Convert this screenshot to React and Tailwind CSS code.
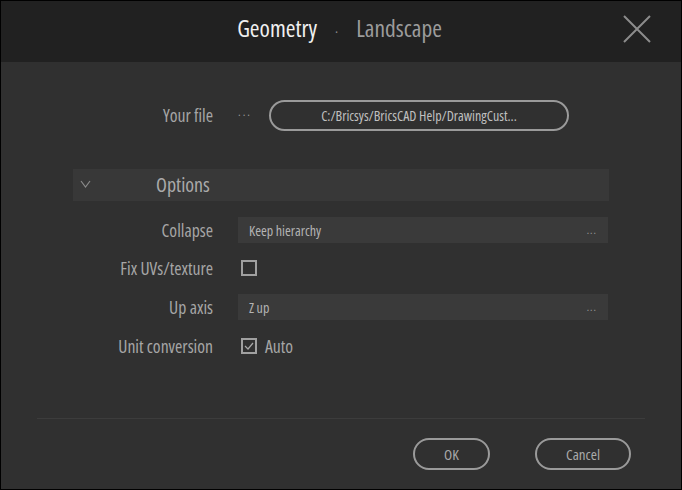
import React from "react";

const Field = ({ value }) => (
  <div className="flex h-[26px] w-[370px] items-center justify-between bg-[#3a3a3a] pl-[11px] pr-[11px] text-[14px] text-[#b4b4b4]">
    <span>{value}</span>
    <span className="text-[11px] tracking-[1px] text-[#9a9a9a]">...</span>
  </div>
);

const Row = ({ label, children, className = "" }) => (
  <div className={`flex items-center ${className}`}>
    <div className="w-[212px] shrink-0 text-right text-[17.7px] text-[#a6a6a6]">{label}</div>
    <div className="ml-[25px] flex items-center">{children}</div>
  </div>
);

const Checkbox = ({ checked }) => (
  <div className="flex h-[16px] w-[16px] items-center justify-center border-2 border-[#a0a0a0]">
    {checked && (
      <svg width="10" height="8" viewBox="0 0 10 8" fill="none">
        <path d="M1 4 L4 7 L9 1" stroke="#a8a8a8" strokeWidth="1.2" />
      </svg>
    )}
  </div>
);

export default function App() {
  return (
    <div className="h-[490px] w-[682px] border border-black bg-[#303030] font-['Open_Sans','DejaVu_Sans_Condensed',sans-serif] [font-stretch:75%]">
      {/* Header */}
      <div className="relative flex h-[61px] items-start justify-center bg-[#212121] pt-[10px]">
        <div className="-ml-[3px] flex items-baseline text-[23.5px]">
          <span className="text-[#f0f0f0]">Geometry</span>
          <span className="mx-[18px] text-[14px] text-[#8a8a8a]">·</span>
          <span className="text-[#9c9c9c]">Landscape</span>
        </div>
        <button className="absolute right-[30px] top-[14px] h-[28px] w-[28px]">
          <svg width="28" height="28" viewBox="0 0 28 28">
            <path d="M1 1 L27 27 M27 1 L1 27" stroke="#8c8c8c" strokeWidth="2" />
          </svg>
        </button>
      </div>

      {/* Body */}
      <div className="flex flex-col">
        <Row label="Your file" className="mt-[38px]">
          <span className="text-[12px] tracking-[2px] text-[#9a9a9a]">···</span>
          <div className="ml-[17px] flex h-[31px] w-[300px] items-center justify-center rounded-full border-2 border-[#9a9a9a] text-[14px] text-[#c0c0c0]">
            C:/Bricsys/BricsCAD Help/DrawingCust...
          </div>
        </Row>

        <div className="ml-[72px] mt-[38px] flex h-[32px] w-[536px] items-center bg-[#383838]">
          <svg className="ml-[7px] -mt-[3px]" width="11" height="8" viewBox="0 0 11 8" fill="none">
            <path d="M1 1 L5.5 7 L10 1" stroke="#8a8a8a" strokeWidth="1.2" />
          </svg>
          <span className="ml-[65px] text-[20px] text-[#aaaaaa]">Options</span>
        </div>

        <Row label="Collapse" className="mt-[16px]">
          <Field value="Keep hierarchy" />
        </Row>
        <Row label="Fix UVs/texture" className="mt-[11px]">
          <div className="ml-[3px]">
            <Checkbox />
          </div>
        </Row>
        <Row label="Up axis" className="mt-[13px]">
          <Field value="Z up" />
        </Row>
        <Row label="Unit conversion" className="mt-[12px]">
          <div className="ml-[3px] flex items-center">
            <Checkbox checked />
            <span className="ml-[8px] text-[17.7px] text-[#a6a6a6]">Auto</span>
          </div>
        </Row>

        <div className="mx-[36px] mt-[59px] h-px bg-[#3c3c3c]" />

        <div className="mr-[50px] mt-[19px] flex justify-end gap-[45px]">
          <button className="h-[32px] w-[77px] rounded-full border-2 border-[#9a9a9a] text-[15px] text-[#aaaaaa]">OK</button>
          <button className="h-[32px] w-[96px] rounded-full border-2 border-[#9a9a9a] text-[15px] text-[#aaaaaa]">Cancel</button>
        </div>
      </div>
    </div>
  );
}
